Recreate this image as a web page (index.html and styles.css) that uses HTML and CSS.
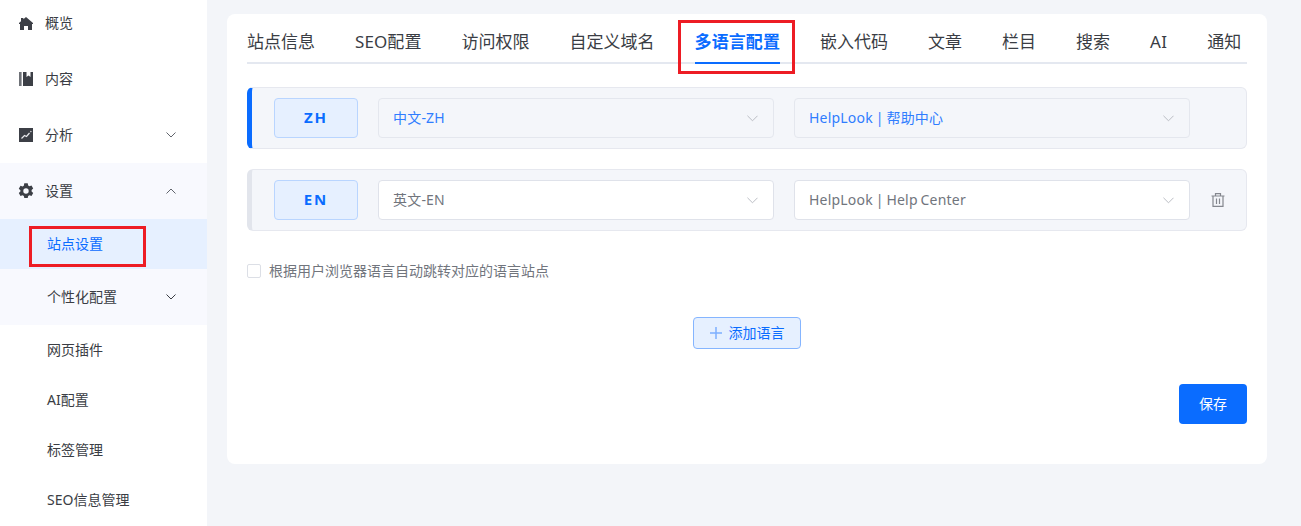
FILE: index.html
```html
<!DOCTYPE html>
<html lang="zh">
<head>
<meta charset="utf-8">
<title>多语言配置</title>
<link rel="stylesheet" href="styles.css">
</head>
<body>
<div class="app">
  <aside class="sidebar">
    <nav class="nav">
      <div class="nav-item">
        <svg class="nav-icon" viewBox="0 0 16 16"><path d="M8 2 5.400 4.200V3H3v3.200L1 8v1h1v6h4v-4h4v4h4V9h1V8z"/></svg>
        <span class="label">概览</span>
      </div>
      <div class="nav-item">
        <svg class="nav-icon" viewBox="0 0 16 16"><path class="book-spine" d="M1 1h2.600v14H1z"/><path d="M5 1h3.500v5l2-1.400 2 1.400V1H15v14H5z"/></svg>
        <span class="label">内容</span>
      </div>
      <div class="nav-item">
        <svg class="nav-icon" viewBox="0 0 16 16"><path d="M1 1h14v14H1z"/><path class="chart-line" d="m3.500 11.500 3-3 2 1 3-3.500M12.500 5l.8-.8"/></svg>
        <span class="label">分析</span>
        <svg class="chev" viewBox="0 0 10 6"><path d="m.5.5 4.500 4.500 4.500-4.500"/></svg>
      </div>
      <div class="nav-item nav-open">
        <svg class="nav-icon" viewBox="0 0 16 16"><path fill-rule="evenodd" d="M6.300.3h3.400l.5 2.200 1.200.7 2.100-.7 1.700 3-1.600 1.500v1.400l1.600 1.500-1.700 3-2.100-.7-1.200.7-.5 2.200H6.300l-.5-2.200-1.200-.7-2.100.7-1.700-3 1.600-1.500V7.300L.8 5.800l1.700-3 2.100.7 1.200-.7zM8 5.300a2.700 2.700 0 1 0 0 5.400 2.700 2.700 0 0 0 0-5.400z"/></svg>
        <span class="label">设置</span>
        <svg class="chev" viewBox="0 0 10 6"><path d="m.5 5.500 4.500-4.500 4.500 4.500"/></svg>
      </div>
      <div class="sub-item sub-active"><span class="text">站点设置</span></div>
      <div class="sub-item sub-open">
        <span class="text">个性化配置</span>
        <svg class="chev chev-dark" viewBox="0 0 10 6"><path d="m.5.5 4.500 4.500 4.500-4.500"/></svg>
      </div>
      <div class="sub-item"><span class="text">网页插件</span></div>
      <div class="sub-item"><span class="text">AI配置</span></div>
      <div class="sub-item"><span class="text">标签管理</span></div>
      <div class="sub-item"><span class="text">SEO信息管理</span></div>
    </nav>
  </aside>
  <main class="main">
    <section class="card">
      <div class="tabs">
        <span class="tab">站点信息</span>
        <span class="tab tab-seo">SEO配置</span>
        <span class="tab">访问权限</span>
        <span class="tab">自定义域名</span>
        <span class="tab tab-active">多语言配置</span>
        <span class="tab">嵌入代码</span>
        <span class="tab">文章</span>
        <span class="tab">栏目</span>
        <span class="tab">搜索</span>
        <span class="tab tab-ai">AI</span>
        <span class="tab">通知</span>
      </div>
      <div class="lang-row lang-row-active">
        <div class="badge"><span class="text">ZH</span></div>
        <div class="select select-active"><span class="text">中文-ZH</span><svg class="select-chev" viewBox="0 0 12 7"><path d="m.5.5 5.500 5.500 5.500-5.500"/></svg></div>
        <div class="select select-active"><span class="text">HelpLook | 帮助中心</span><svg class="select-chev" viewBox="0 0 12 7"><path d="m.5.5 5.500 5.500 5.500-5.500"/></svg></div>
      </div>
      <div class="lang-row">
        <div class="badge"><span class="text">EN</span></div>
        <div class="select"><span class="text">英文-EN</span><svg class="select-chev" viewBox="0 0 12 7"><path d="m.5.5 5.500 5.500 5.500-5.500"/></svg></div>
        <div class="select"><span class="text">HelpLook | Help Center</span><svg class="select-chev" viewBox="0 0 12 7"><path d="m.5.5 5.500 5.500 5.500-5.500"/></svg></div>
        <svg class="trash" viewBox="0 0 14 14"><path d="M.5 3h13M4.500 3V.7h5V3M2 3v10.400h10V3M5.500 5.500V11M8.500 5.500V11"/></svg>
      </div>
      <label class="auto-jump"><span class="checkbox"></span><span class="text">根据用户浏览器语言自动跳转对应的语言站点</span></label>
      <div class="add-wrap">
        <div class="add-btn"><svg class="plus" viewBox="0 0 12 12"><path d="M6 0v12M0 6h12"/></svg><span class="text">添加语言</span></div>
      </div>
      <div class="save-wrap"><div class="save-btn"><span class="text">保存</span></div></div>
    </section>
  </main>
</div>
<div class="mark mark-side"></div>
<div class="mark mark-tab"></div>
</body>
</html>
```
FILE: styles.css
```css
* { box-sizing: border-box; }
html, body { margin: 0; height: 100%; overflow: hidden; }
body {
  font-family: "Noto Sans", "Noto Sans CJK SC", sans-serif;
  color: #3a3d44;
  background: #f3f5f9;
  position: relative;
}
.app { display: flex; height: 526px; overflow: hidden; }
.sidebar { width: 207px; flex: none; background: #fff; overflow: hidden; }
.nav { margin-top: -5px; font-size: 14px; }
.text, .label { padding-bottom: 2px; }
.nav-item {
  height: 56px;
  display: flex;
  align-items: center;
  padding: 0 31px 0 18px;
}
.label { margin-left: 11px; flex: 1; }
.nav-icon { width: 16px; height: 16px; fill: #3c3f46; flex: none; }
.book-spine { fill: #6f7278; }
.chart-line { fill: none; stroke: #e8e9ec; stroke-width: 1.200; }
.nav-open { background: #f8f9fe; }
.chev { width: 10px; height: 6px; fill: none; stroke: #60646c; stroke-width: 1; flex: none; }
.chev-dark { stroke: #3a3d44; }
.sub-item {
  height: 50px;
  display: flex;
  align-items: center;
  justify-content: space-between;
  padding: 0 31px 0 47px;
}
.sub-active { background: #e6f0ff; color: #0a6cff; }
.sub-open { height: 56px; background: #f8f9fe; }
.main { flex: 1; padding: 14px 34px 0 20px; }
.card {
  background: #fff;
  border-radius: 8px;
  height: 450px;
  padding: 0 20px;
}
.tabs {
  display: flex;
  gap: 40px;
  height: 50px;
  border-bottom: 2px solid #e4e8f0;
  font-size: 17px;
  line-height: 26px;
  padding-top: 15px;
}
.tab { height: 35px; flex: none; white-space: nowrap; }
.tab-seo { letter-spacing: .1px; }
.tab-ai { letter-spacing: .3px; }
.tab-active {
  color: #0a6cff;
  font-weight: 700;
  letter-spacing: .1px;
  border-bottom: 2px solid #0a6cff;
}
.lang-row {
  height: 62px;
  margin-top: 23px;
  display: flex;
  align-items: center;
  gap: 20px;
  padding-left: 22px;
  background: #f4f6fa;
  border: 1px solid #e6e8ef;
  border-left: 5px solid #e2e5ec;
  border-radius: 6px;
}
.lang-row + .lang-row { margin-top: 20px; }
.lang-row-active { border-left-color: #0a6cff; }
.badge {
  width: 84px;
  height: 40px;
  display: flex;
  align-items: center;
  justify-content: center;
  background: #e6f0ff;
  border: 1px solid #b9d5ff;
  border-radius: 4px;
  color: #0a6cff;
  font-weight: 700;
  font-size: 15px;
  letter-spacing: 2px;
}
.select {
  width: 396px;
  height: 40px;
  display: flex;
  align-items: center;
  justify-content: space-between;
  padding: 0 15px 0 14px;
  background: #fff;
  border: 1px solid #dfe2ea;
  border-radius: 4px;
  font-size: 14px;
  letter-spacing: .2px;
  word-spacing: -1px;
  color: #71757d;
}
.select-active { background: #f4f6fa; border-color: #e4e7ee; color: #2f7dff; }
.select-chev { width: 11px; height: 7px; fill: none; stroke: #b5b8bf; stroke-width: 1; }
.trash { width: 14px; height: 14px; margin-left: 1px; fill: none; stroke: #84878e; stroke-width: 1.200; }
.auto-jump {
  display: flex;
  align-items: center;
  gap: 8px;
  margin-top: 30px;
  height: 20px;
  font-size: 14px;
  color: #71757d;
}
.checkbox {
  width: 14px;
  height: 14px;
  background: #fff;
  border: 1px solid #dcdfe6;
  border-radius: 2px;
}
.add-wrap { display: flex; justify-content: center; margin-top: 36px; }
.add-btn {
  width: 108px;
  height: 32px;
  display: flex;
  align-items: center;
  justify-content: center;
  gap: 7px;
  background: #e6f0ff;
  border: 1px solid #85b5ff;
  border-radius: 4px;
  color: #0a6cff;
  font-size: 14px;
}
.plus { width: 12px; height: 12px; fill: none; stroke: #7dafff; stroke-width: 1.500; }
.save-wrap { display: flex; justify-content: flex-end; margin-top: 35px; }
.save-btn {
  width: 68px;
  height: 40px;
  display: flex;
  align-items: center;
  justify-content: center;
  background: #0a6cff;
  border-radius: 4px;
  color: #fff;
  font-size: 14px;
}
.mark { position: absolute; border: 3px solid #ed1c24; pointer-events: none; }
.mark-side { left: 29px; top: 226px; width: 117px; height: 41px; }
.mark-tab { left: 678px; top: 20px; width: 117px; height: 54px; }
```
